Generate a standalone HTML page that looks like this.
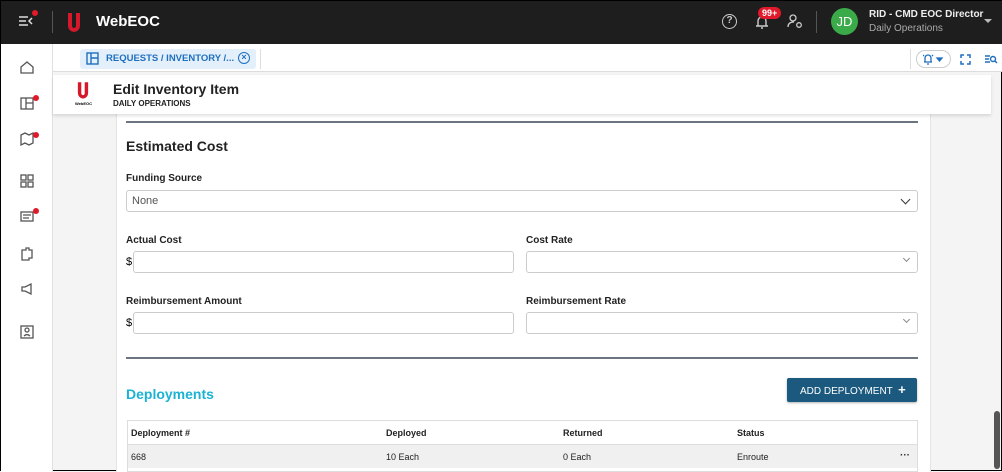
<!DOCTYPE html>
<html><head><meta charset="utf-8"><style>
*{box-sizing:border-box;margin:0;padding:0}
body{width:1002px;height:471px;overflow:hidden;font-family:"Liberation Sans",sans-serif;background:#f4f4f4;position:relative;border:1px solid #000}
.abs{position:absolute}
.top{left:0;top:0;width:1002px;height:43px;background:#1e1e1e}
.side{left:0;top:43px;width:52px;height:428px;background:#fff;border-right:1px solid #e0e0e0}
.lbl{font-size:10px;font-weight:bold;color:#222}
.inp{background:#fff;border:1px solid #ccc;border-radius:3px;height:22px}
.dot{width:6px;height:6px;border-radius:50%;background:#e0192b}
.chev{position:absolute;right:8px;top:5px;width:7px;height:7px;border-right:1.5px solid #888;border-bottom:1.5px solid #888;transform:rotate(45deg)}
</style></head><body>
<div class="abs top"></div>
<svg class="abs" style="left:17px;top:13px" width="16" height="14" viewBox="0 0 16 14"><path d="M1 3h9M1 7h7M1 11h9M14 4l-3 3 3 3" stroke="#ddd" stroke-width="1.5" fill="none"/></svg>
<div class="abs dot" style="left:31px;top:9px"></div>
<div class="abs" style="left:51px;top:10px;width:1px;height:22px;background:#555"></div>
<svg class="abs" style="left:66px;top:11px" width="14" height="20" viewBox="0 0 14 20"><path d="M1 1h4v12q0 3 2 3t2-3V1h4v12q0 6-6 7q-6-1-6-7z" fill="#d7182a"/></svg>
<div class="abs" style="left:95px;top:12px;color:#fff;font-size:15px;font-weight:bold">WebEOC</div>
<div class="abs" style="left:721px;top:13px;width:15px;height:15px;border:1.5px solid #ccc;border-radius:50%;color:#ccc;font-size:10px;text-align:center;line-height:12px;font-weight:bold">?</div>
<svg class="abs" style="left:754px;top:13px" width="14" height="16"><path d="M3 12V7a4 4 0 0 1 8 0v5h2H1z M6 14h2" stroke="#ccc" stroke-width="1.4" fill="none"/></svg>
<div class="abs" style="left:757px;top:6px;background:#e0192b;color:#fff;font-size:9px;font-weight:bold;border-radius:7px;padding:1px 4px">99+</div>
<svg class="abs" style="left:786px;top:13px" width="16" height="15"><circle cx="6" cy="4" r="3" stroke="#ccc" fill="none" stroke-width="1.3"/><path d="M1 13q0-5 6-5" stroke="#ccc" fill="none" stroke-width="1.3"/><circle cx="12" cy="11" r="2.3" stroke="#ccc" fill="none" stroke-width="1.3"/></svg>
<div class="abs" style="left:815px;top:10px;width:1px;height:22px;background:#555"></div>
<div class="abs" style="left:830px;top:7px;width:27px;height:27px;border-radius:50%;background:#3bab4a;color:#fff;font-size:13px;text-align:center;line-height:27px">JD</div>
<div class="abs" style="left:868px;top:8px;color:#eee;font-size:10px;font-weight:bold">RID - CMD EOC Director</div>
<div class="abs" style="left:868px;top:22px;color:#aaa;font-size:10px">Daily Operations</div>
<div class="abs" style="left:983px;top:18px;border:4px solid transparent;border-top-color:#bbb"></div>
<div class="abs side"></div>
<svg class="abs" style="left:19px;top:59px" width="14" height="285" fill="none" stroke="#555" stroke-width="1.3"><path d="M1 7l6-5 6 5v6H1z"/><rect x="1" y="38" width="12" height="11"/><path d="M6 38v11M6 43h7"/><path d="M1 75l4-2 4 2 4-2v10l-4 2-4-2-4 2z"/><rect x="1" y="115" width="5" height="5"/><rect x="8" y="115" width="5" height="5"/><rect x="1" y="122" width="5" height="5"/><rect x="8" y="122" width="5" height="5"/><rect x="1" y="152" width="12" height="9"/><path d="M3 155h8M3 158h6"/><path d="M2 190h4v-2h3v2h3v8h-3v2H2z"/><path d="M2 227h3l6-3v10l-6-3H2z"/><rect x="1" y="266" width="12" height="12"/><circle cx="7" cy="270" r="2"/><path d="M4 276q3-3 6 0"/></svg>
<div class="abs dot" style="left:32px;top:94px"></div>
<div class="abs dot" style="left:32px;top:131px"></div>
<div class="abs dot" style="left:32px;top:207px"></div>
<div class="abs" style="left:52px;top:43px;width:950px;height:28px;background:#fff;border-bottom:1px solid #ddd"></div>
<div class="abs" style="left:79px;top:48px;width:176px;height:20px;background:#e3f0fb;border-radius:3px"></div>
<svg class="abs" style="left:85px;top:51px" width="13" height="13" fill="none" stroke="#1f6fbf" stroke-width="1.4"><rect x="1" y="1" width="11" height="11"/><path d="M5 1v11M5 6h7"/></svg>
<div class="abs" style="left:105px;top:52px;color:#1f6fbf;font-size:9.5px;font-weight:bold;white-space:nowrap">REQUESTS / INVENTORY /...</div>
<div class="abs" style="left:237px;top:51px;width:12px;height:12px;border:1.4px solid #1f6fbf;border-radius:50%;color:#1f6fbf;font-size:9px;line-height:9px;text-align:center;font-weight:bold">×</div>
<div class="abs" style="left:259px;top:48px;width:1px;height:20px;background:#ddd"></div>
<div class="abs" style="left:909px;top:48px;width:1px;height:20px;background:#ddd"></div>
<div class="abs" style="left:915px;top:49px;width:35px;height:18px;border:1px solid #ccc;border-radius:9px"></div>
<svg class="abs" style="left:922px;top:52px" width="22" height="12" fill="none" stroke="#1f6fbf" stroke-width="1.3"><path d="M2 9V5a3 3 0 0 1 6 0v4h1H1zM4 11h2M0 3l1-1M10 3l-1-1"/><path d="M14 5h5l-2.5 3z" fill="#1f6fbf"/></svg>
<svg class="abs" style="left:959px;top:53px" width="11" height="11" fill="none" stroke="#1f6fbf" stroke-width="1.5"><path d="M1 4V1h3M7 1h3v3M10 7v3H7M4 10H1V7"/></svg>
<svg class="abs" style="left:983px;top:53px" width="14" height="11" fill="none" stroke="#1f6fbf" stroke-width="1.4"><path d="M1 2h5M1 5h4M1 8h5"/><circle cx="9" cy="5" r="2.5"/><path d="M11 7l2 2"/></svg>
<div class="abs" style="left:52px;top:74px;width:938px;height:39px;background:#fff;box-shadow:0 2px 3px rgba(0,0,0,.12);z-index:2"></div>
<svg class="abs" style="left:76px;top:80px;z-index:3" width="12" height="18" viewBox="0 0 14 20"><path d="M1 1h4v12q0 3 2 3t2-3V1h4v12q0 6-6 7q-6-1-6-7z" fill="#d7182a"/></svg>
<div class="abs" style="left:74px;top:100px;font-size:4px;z-index:3;font-weight:bold">WebEOC</div>
<div class="abs" style="left:112px;top:80px;font-size:14px;font-weight:bold;color:#222;z-index:3">Edit Inventory Item</div>
<div class="abs" style="left:112px;top:98px;font-size:8px;font-weight:bold;color:#222;z-index:3">DAILY OPERATIONS</div>
<div class="abs" style="left:115px;top:113px;width:815px;height:358px;background:#fff;border-left:1px solid #e4e4e4;border-right:1px solid #e4e4e4"></div>
<div class="abs" style="left:125px;top:120px;width:792px;height:1.5px;background:#6b7480"></div>
<div class="abs" style="left:125px;top:137px;font-size:14px;font-weight:bold;color:#222">Estimated Cost</div>
<div class="abs lbl" style="left:125px;top:172px">Funding Source</div>
<div class="abs inp" style="left:125px;top:189px;width:792px;color:#555;font-size:11px;padding:4px 5px">None<span class="chev" style="border-color:#333"></span></div>
<div class="abs lbl" style="left:125px;top:234px">Actual Cost</div>
<div class="abs" style="left:125px;top:255px;font-size:11px">$</div>
<div class="abs inp" style="left:132px;top:250px;width:381px"></div>
<div class="abs lbl" style="left:525px;top:234px">Cost Rate</div>
<div class="abs inp" style="left:525px;top:250px;width:392px"><span class="chev" style="top:4px;width:5px;height:5px"></span></div>
<div class="abs lbl" style="left:125px;top:295px">Reimbursement Amount</div>
<div class="abs" style="left:125px;top:316px;font-size:11px">$</div>
<div class="abs inp" style="left:132px;top:311px;width:381px"></div>
<div class="abs lbl" style="left:525px;top:295px">Reimbursement Rate</div>
<div class="abs inp" style="left:525px;top:311px;width:392px"><span class="chev" style="top:4px;width:5px;height:5px"></span></div>
<div class="abs" style="left:125px;top:356px;width:792px;height:1.5px;background:#6b7480"></div>
<div class="abs" style="left:125px;top:385px;font-size:14px;font-weight:bold;color:#1cb3d3">Deployments</div>
<div class="abs" style="left:786px;top:377px;width:130px;height:24px;background:#1b5a7e;border-radius:2px;color:#fff;font-size:10px;line-height:24px;padding-left:13px;box-shadow:0 1px 2px rgba(0,0,0,.3)">ADD DEPLOYMENT &nbsp;<b style="font-size:13px">+</b></div>
<div class="abs" style="left:126px;top:419px;width:791px;height:52px;border:1px solid #ddd"></div>
<div class="abs" style="left:127px;top:443px;width:789px;height:24px;background:#f0f0f0;border-top:1px solid #ddd"></div>
<div class="abs" style="left:130px;top:427px;font-size:9px;color:#222;font-weight:bold">Deployment #</div>
<div class="abs" style="left:385px;top:427px;font-size:9px;color:#222;font-weight:bold">Deployed</div>
<div class="abs" style="left:562px;top:427px;font-size:9px;color:#222;font-weight:bold">Returned</div>
<div class="abs" style="left:736px;top:427px;font-size:9px;color:#222;font-weight:bold">Status</div>
<div class="abs" style="left:130px;top:451px;font-size:9px;color:#222">668</div>
<div class="abs" style="left:385px;top:451px;font-size:9px;color:#222">10 Each</div>
<div class="abs" style="left:562px;top:451px;font-size:9px;color:#222">0 Each</div>
<div class="abs" style="left:736px;top:451px;font-size:9px;color:#222">Enroute</div>
<div class="abs" style="left:899px;top:449px;font-size:10px;font-weight:bold;color:#333">···</div>
<div class="abs" style="left:993px;top:410px;width:6px;height:58px;background:#555;border-radius:3px"></div>
</body></html>
